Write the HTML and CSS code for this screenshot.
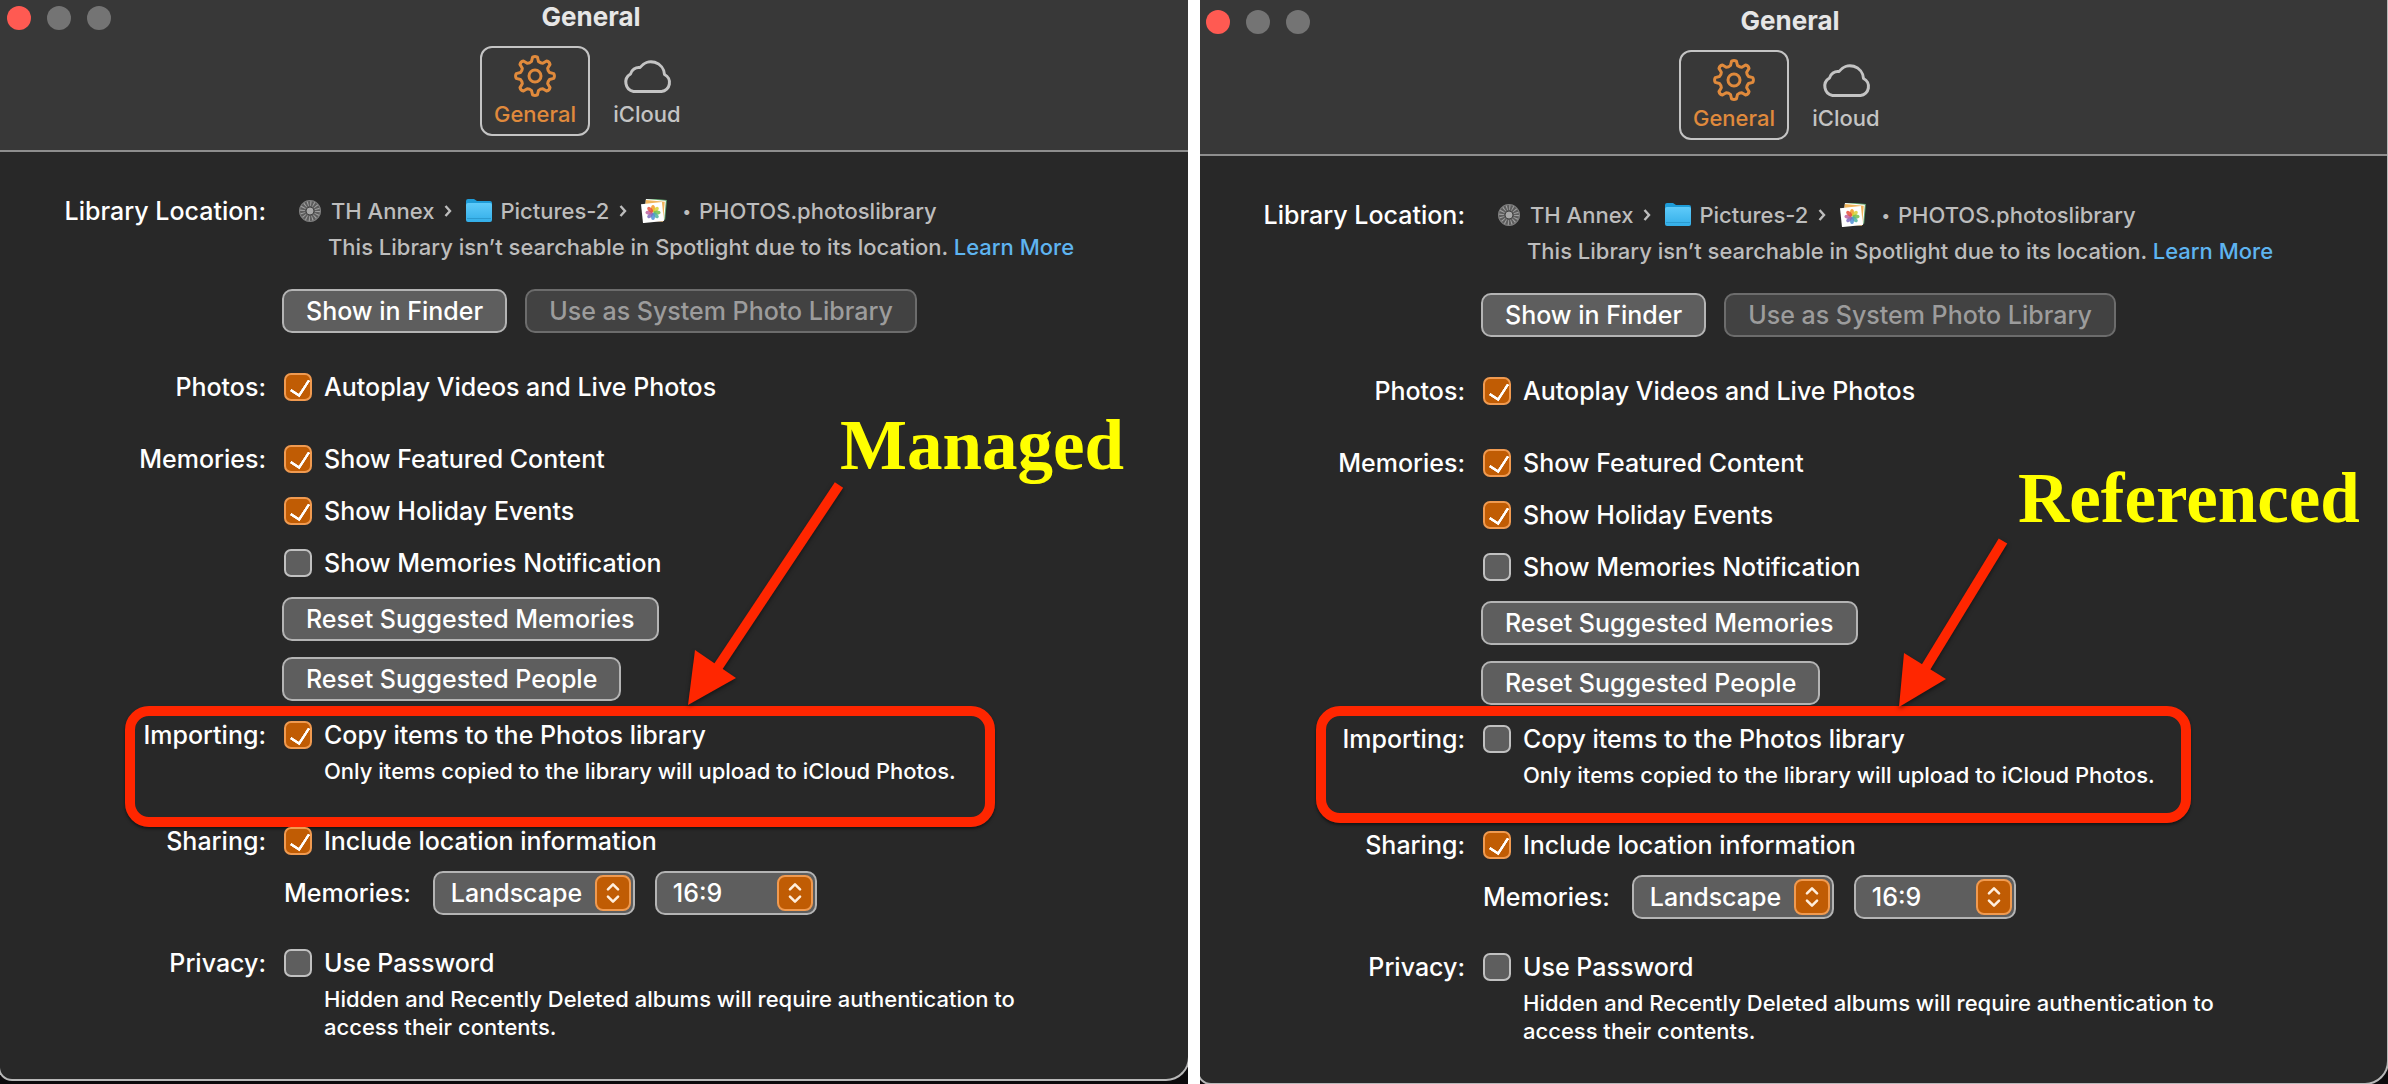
FILE: index.html
```
<!DOCTYPE html>
<html lang="en">
<head>
  <meta charset="UTF-8">
  <meta name="viewport" content="width=device-width, initial-scale=1.0">
  <title>Photos Settings - Managed vs Referenced</title>
  <link rel="stylesheet" href="styles.css">
</head>
<body>
  <!-- shared icons -->
  <svg class="sprite" aria-hidden="true">
    <linearGradient id="folderFill" x1="0" y1="0" x2="0" y2="1">
      <stop offset="0" stop-color="#5fcbfa"/>
      <stop offset="1" stop-color="#33aee8"/>
    </linearGradient>
    <symbol id="gear" viewBox="0 0 42 42">
      <g fill="none" stroke="currentColor" stroke-width="3" stroke-linejoin="round">
        <circle cx="21" cy="21" r="6"/>
        <path d="M17.5 6.5 L18.6 2.2 Q21 1 23.4 2.2 L24.5 6.5 Q26.8 8.4 28.8 8.3 L32.6 6 Q35.4 6.6 36 9.4 L33.7 13.2 Q33.6 15.4 35.5 17.5 L39.8 18.6 Q41 21 39.8 23.4 L35.5 24.5 Q33.6 26.8 33.7 28.8 L36 32.6 Q35.4 35.4 32.6 36 L28.8 33.7 Q26.6 33.6 24.5 35.5 L23.4 39.8 Q21 41 18.6 39.8 L17.5 35.5 Q15.4 33.6 13.2 33.7 L9.4 36 Q6.6 35.4 6 32.6 L8.3 28.8 Q8.4 26.6 6.5 24.5 L2.2 23.4 Q1 21 2.2 18.6 L6.5 17.5 Q8.4 15.4 8.3 13.2 L6 9.4 Q6.6 6.6 9.4 6 L13.2 8.3 Q15.4 8.4 17.5 6.5 Z"/>
      </g>
    </symbol>
    <symbol id="cloud" viewBox="0 0 50 36">
      <path d="M11.5 33.5 A9.5 9.5 0 0 1 8.5 16 A8.5 8.5 0 0 1 18 9.5 A13.5 13.5 0 0 1 42.5 16.5 A9 9 0 0 1 39.5 33.5 Z" fill="none" stroke="currentColor" stroke-width="3" stroke-linejoin="round"/>
    </symbol>
    <symbol id="disk" viewBox="0 0 24 24">
      <circle cx="12" cy="12" r="11" fill="#5c5c5c"/>
      <circle cx="12" cy="12" r="7.5" fill="none" stroke="#a0a0a0" stroke-width="5" stroke-dasharray="1 1.95"/>
      <circle cx="12" cy="12" r="10.5" fill="none" stroke="#808080"/>
      <circle cx="12" cy="12" r="4" fill="#a8a8a8" stroke="#444"/>
    </symbol>
    <symbol id="folder" viewBox="0 0 26 24">
      <path d="M0 2 Q0 0 2 0 H8 L11 2 H24 Q26 2 26 4 V12 H0 Z" fill="#1e9cd8"/>
      <rect y="4" width="26" height="19" rx="2" fill="url(#folderFill)"/>
      <path d="M1 19.5 H25" stroke="#2b9bd0"/>
    </symbol>
    <symbol id="library" viewBox="0 0 26 24">
      <g transform="rotate(5 15 11)">
        <rect x="5" y="0" width="20" height="20" fill="#62a36b"/>
        <rect x="4" y="1" width="20" height="20" fill="#fff"/>
        <rect x="4" y="2" width="19" height="20" fill="#f0b45b"/>
      </g>
      <rect x="1" y="4" width="21" height="19" fill="#fff" transform="rotate(-6 12 14)"/>
      <g fill-opacity=".85">
        <ellipse cx="12" cy="9.5" rx="2" ry="3.5" fill="#f59b23"/>
        <ellipse cx="12" cy="9.5" rx="2" ry="3.5" fill="#d8d034" transform="rotate(45 12 13.5)"/>
        <ellipse cx="12" cy="9.5" rx="2" ry="3.5" fill="#74bf4b" transform="rotate(90 12 13.5)"/>
        <ellipse cx="12" cy="9.5" rx="2" ry="3.5" fill="#4bb39c" transform="rotate(135 12 13.5)"/>
        <ellipse cx="12" cy="9.5" rx="2" ry="3.5" fill="#4f8fd6" transform="rotate(180 12 13.5)"/>
        <ellipse cx="12" cy="9.5" rx="2" ry="3.5" fill="#7d6cc0" transform="rotate(225 12 13.5)"/>
        <ellipse cx="12" cy="9.5" rx="2" ry="3.5" fill="#c0609f" transform="rotate(270 12 13.5)"/>
        <ellipse cx="12" cy="9.5" rx="2" ry="3.5" fill="#e8503c" transform="rotate(315 12 13.5)"/>
      </g>
    </symbol>
    <symbol id="chevron" viewBox="0 0 8 12">
      <path d="M1.5 1 L6 6 L1.5 11" fill="none" stroke="currentColor" stroke-width="2.4"/>
    </symbol>
    <symbol id="stepper" viewBox="0 0 16 24">
      <path d="M2.5 8 L8 2.5 L13.5 8 M2.5 16 L8 21.5 L13.5 16" fill="none" stroke="#ffeedd" stroke-width="2.8" stroke-linecap="round" stroke-linejoin="round"/>
    </symbol>
  </svg>

  <main class="compare">
    <section class="panel">
      <div class="window">
        <header class="titlebar">
          <div class="lights">
            <button type="button" class="light close" aria-label="Close"></button>
            <button type="button" class="light" aria-label="Minimize"></button>
            <button type="button" class="light" aria-label="Zoom"></button>
          </div>
          <h1>General</h1>
          <nav class="tabs">
            <button type="button" class="tab active"><svg class="tab-icon"><use href="#gear"/></svg>General</button>
            <button type="button" class="tab"><svg class="tab-icon cloud"><use href="#cloud"/></svg>iCloud</button>
          </nav>
        </header>

        <form class="settings">
          <div class="row">
            <span class="label">Library Location:</span>
            <div class="field">
              <div class="path">
                <svg class="path-icon"><use href="#disk"/></svg><span>TH Annex</span>
                <svg class="chevron"><use href="#chevron"/></svg>
                <svg class="path-icon"><use href="#folder"/></svg><span>Pictures-2</span>
                <svg class="chevron"><use href="#chevron"/></svg>
                <svg class="path-icon"><use href="#library"/></svg><span class="bullet">•</span><span>PHOTOS.photoslibrary</span>
              </div>
              <p class="note spotlight">This Library isn’t searchable in Spotlight due to its location. <a href="#">Learn More</a></p>
              <div class="buttons">
                <button type="button" class="btn">Show in Finder</button>
                <button type="button" class="btn" disabled>Use as System Photo Library</button>
              </div>
            </div>
          </div>

          <div class="row photos">
            <span class="label">Photos:</span>
            <div class="field">
              <label class="check"><input type="checkbox" checked>Autoplay Videos and Live Photos</label>
            </div>
          </div>

          <div class="row memories">
            <span class="label">Memories:</span>
            <div class="field">
              <label class="check"><input type="checkbox" checked>Show Featured Content</label>
              <label class="check"><input type="checkbox" checked>Show Holiday Events</label>
              <label class="check"><input type="checkbox">Show Memories Notification</label>
              <button type="button" class="btn">Reset Suggested Memories</button>
              <button type="button" class="btn">Reset Suggested People</button>
            </div>
          </div>

          <div class="row importing">
            <span class="label">Importing:</span>
            <div class="field">
              <label class="check"><input type="checkbox" checked>Copy items to the Photos library</label>
              <p class="note">Only items copied to the library will upload to iCloud Photos.</p>
            </div>
            <div class="highlight"></div>
          </div>

          <div class="row sharing">
            <span class="label">Sharing:</span>
            <div class="field">
              <label class="check"><input type="checkbox" checked>Include location information</label>
              <div class="selects">
                <label for="orientation1">Memories:</label>
                <span class="select orientation">
                  <select id="orientation1"><option>Landscape</option><option>Portrait</option></select>
                  <svg class="stepper"><use href="#stepper"/></svg>
                </span>
                <span class="select ratio">
                  <select aria-label="Aspect ratio"><option>16:9</option><option>4:3</option></select>
                  <svg class="stepper"><use href="#stepper"/></svg>
                </span>
              </div>
            </div>
          </div>

          <div class="row privacy">
            <span class="label">Privacy:</span>
            <div class="field">
              <label class="check"><input type="checkbox">Use Password</label>
              <p class="note">Hidden and Recently Deleted albums will require authentication to access their contents.</p>
            </div>
          </div>
        </form>
      </div>

      <svg class="arrow managed-arrow" viewBox="0 0 160 230">
        <path d="M155 5 L28 196" stroke="#ff2600" stroke-width="10"/>
        <path d="M4 225 L11 170 L52 198 Z" fill="#ff2600"/>
      </svg>
      <strong class="caption managed">Managed</strong>
    </section>

    <section class="panel referenced-panel">
      <div class="window">
        <header class="titlebar">
          <div class="lights">
            <button type="button" class="light close" aria-label="Close"></button>
            <button type="button" class="light" aria-label="Minimize"></button>
            <button type="button" class="light" aria-label="Zoom"></button>
          </div>
          <h1>General</h1>
          <nav class="tabs">
            <button type="button" class="tab active"><svg class="tab-icon"><use href="#gear"/></svg>General</button>
            <button type="button" class="tab"><svg class="tab-icon cloud"><use href="#cloud"/></svg>iCloud</button>
          </nav>
        </header>

        <form class="settings">
          <div class="row">
            <span class="label">Library Location:</span>
            <div class="field">
              <div class="path">
                <svg class="path-icon"><use href="#disk"/></svg><span>TH Annex</span>
                <svg class="chevron"><use href="#chevron"/></svg>
                <svg class="path-icon"><use href="#folder"/></svg><span>Pictures-2</span>
                <svg class="chevron"><use href="#chevron"/></svg>
                <svg class="path-icon"><use href="#library"/></svg><span class="bullet">•</span><span>PHOTOS.photoslibrary</span>
              </div>
              <p class="note spotlight">This Library isn’t searchable in Spotlight due to its location. <a href="#">Learn More</a></p>
              <div class="buttons">
                <button type="button" class="btn">Show in Finder</button>
                <button type="button" class="btn" disabled>Use as System Photo Library</button>
              </div>
            </div>
          </div>

          <div class="row photos">
            <span class="label">Photos:</span>
            <div class="field">
              <label class="check"><input type="checkbox" checked>Autoplay Videos and Live Photos</label>
            </div>
          </div>

          <div class="row memories">
            <span class="label">Memories:</span>
            <div class="field">
              <label class="check"><input type="checkbox" checked>Show Featured Content</label>
              <label class="check"><input type="checkbox" checked>Show Holiday Events</label>
              <label class="check"><input type="checkbox">Show Memories Notification</label>
              <button type="button" class="btn">Reset Suggested Memories</button>
              <button type="button" class="btn">Reset Suggested People</button>
            </div>
          </div>

          <div class="row importing">
            <span class="label">Importing:</span>
            <div class="field">
              <label class="check"><input type="checkbox">Copy items to the Photos library</label>
              <p class="note">Only items copied to the library will upload to iCloud Photos.</p>
            </div>
            <div class="highlight"></div>
          </div>

          <div class="row sharing">
            <span class="label">Sharing:</span>
            <div class="field">
              <label class="check"><input type="checkbox" checked>Include location information</label>
              <div class="selects">
                <label for="orientation2">Memories:</label>
                <span class="select orientation">
                  <select id="orientation2"><option>Landscape</option><option>Portrait</option></select>
                  <svg class="stepper"><use href="#stepper"/></svg>
                </span>
                <span class="select ratio">
                  <select aria-label="Aspect ratio"><option>16:9</option><option>4:3</option></select>
                  <svg class="stepper"><use href="#stepper"/></svg>
                </span>
              </div>
            </div>
          </div>

          <div class="row privacy">
            <span class="label">Privacy:</span>
            <div class="field">
              <label class="check"><input type="checkbox">Use Password</label>
              <p class="note">Hidden and Recently Deleted albums will require authentication to access their contents.</p>
            </div>
          </div>
        </form>
      </div>

      <svg class="arrow referenced-arrow" viewBox="0 0 120 180">
        <path d="M107 11 L27 142" stroke="#ff2600" stroke-width="10"/>
        <path d="M3 177 L8 123 L50 149 Z" fill="#ff2600"/>
      </svg>
      <strong class="caption referenced">Referenced</strong>
    </section>
  </main>
</body>
</html>
```

FILE: styles.css
```
* { box-sizing: border-box; }
body { margin: 0; background-color: #fff; font-family: Inter, "Liberation Sans", sans-serif; font-size: 25px; font-weight: 500; line-height: 28px; color: #fff; }
button, select { font: inherit; color: inherit; }
h1, p { margin: 0; }
.sprite { position: absolute; width: 0; height: 0; }

.compare { display: grid; grid-template-columns: 1fr 1fr; gap: 12px; min-height: 100vh; }
.panel { position: relative; overflow: hidden; background-color: #0c0a0c; }
.window { margin: 0 -2px; background-color: #282828; border: 2px solid #b8b8b8; border-top: none; border-radius: 0 0 24px 14px; overflow: hidden; }
.referenced-panel .window { margin: 0 -1px 0 -3px; }

/* title bar */
.titlebar { position: relative; padding: 3px 6px 14px 0; background-color: #383838; border-bottom: 2px solid #8e8e8e; }
.referenced-panel .titlebar { padding-top: 7px; }
.lights { position: absolute; left: 7px; margin-top: 3px; display: flex; gap: 16px; }
.light { width: 24px; height: 24px; padding: 0; border: none; border-radius: 50%; background-color: #747474; }
.light.close { background-color: #ff5a52; }
.titlebar h1 { font-size: 26px; line-height: 28px; font-weight: 700; text-align: center; color: #e6e6e6; }
.tabs { display: flex; justify-content: center; gap: 2px; margin-top: 15px; }
.tab { display: flex; flex-direction: column; align-items: center; width: 110px; height: 90px; padding: 7px 0 0; border: 2px solid transparent; border-radius: 12px; background: none; color: #c4c4c4; font-size: 22px; line-height: 28px; }
.tab.active { border-color: #c4c4c4; color: #e08a3c; }
.tab-icon { width: 42px; height: 42px; margin-bottom: 3px; }
.tab-icon.cloud { width: 50px; }

/* settings form */
.settings { padding: 45px 0 38px; }
.row { display: grid; grid-template-columns: 266px 1fr; column-gap: 16px; position: relative; }
.label { height: 28px; line-height: 28px; text-align: right; }
.field { display: flex; flex-direction: column; align-items: flex-start; }
.photos { margin-top: 40px; }
.memories { margin-top: 44px; }
.importing { margin-top: 20px; }
.sharing { margin-top: 42px; }
.privacy { margin-top: 34px; }

.path { display: flex; align-items: center; padding-left: 15px; color: #bdbdbd; font-size: 22px; }
.path-icon { width: 26px; height: 24px; margin-right: 8px; }
.chevron { width: 8px; height: 12px; margin: 0 14px 0 10px; }
.bullet { margin: 0 8px 0 7px; font-size: 16px; }
.note { max-width: 740px; margin: 8px 0 0 42px; font-size: 22px; }
.spotlight { max-width: none; margin-left: 46px; color: #bdbdbd; }
.note a { color: #5eb4f0; text-decoration: none; }

.buttons { display: flex; gap: 18px; margin-top: 28px; }
.btn { height: 44px; padding: 0 22px; border: 2px solid #b4b4b4; border-radius: 10px; background-color: #5e5e5e; line-height: 28px; }
.btn:disabled { border-color: #6c6c6c; background-color: #424242; color: #9c9c9c; }
.check + .btn { margin-top: 20px; }
.btn + .btn { margin-top: 16px; }
.buttons .btn { margin-top: 0; }

.check { display: flex; align-items: center; gap: 12px; height: 28px; margin-left: 2px; }
.check + .check { margin-top: 24px; }
.check input { appearance: none; position: relative; width: 28px; height: 28px; margin: 0; border: 2px solid #c0c0c0; border-radius: 7px; background-color: #5e5e5e; }
.check input:checked { border-color: #f09a50; background-color: #c05c04; }
.check input:checked::after { content: ""; position: absolute; left: 8px; top: 1px; width: 9px; height: 17px; border: solid #fff; border-width: 0 3px 3px 0; border-radius: 1px; transform: rotate(33deg); }

.selects { display: flex; align-items: center; margin: 16px 0 0 2px; }
.select { position: relative; }
.select select { appearance: none; display: block; width: 100%; height: 44px; padding: 0 16px; border: 2px solid #b4b4b4; border-radius: 10px; background-color: #5e5e5e; line-height: 28px; }
.orientation { width: 202px; margin-left: 22px; }
.ratio { width: 162px; margin-left: 20px; }
.stepper { position: absolute; right: 4px; top: 4px; width: 36px; height: 36px; padding: 5px 8px; border: 2px solid #f09a50; border-radius: 8px; background-color: #c05c04; pointer-events: none; }

/* annotations */
.highlight { position: absolute; left: 125px; top: -15px; width: 870px; height: 121px; border: 10px solid #ff2600; border-radius: 24px; box-shadow: 0 2px 3px rgba(0, 0, 0, 0.5); }
.referenced-panel .highlight { left: 117px; top: -19px; width: 875px; height: 117px; }
.arrow { position: absolute; filter: drop-shadow(0 2px 2px rgba(0, 0, 0, 0.5)); }
.managed-arrow { left: 684px; top: 480px; width: 160px; height: 230px; }
.referenced-arrow { left: 696px; top: 530px; width: 120px; height: 180px; }
.caption { position: absolute; font-family: "Liberation Serif", "Times New Roman", serif; font-size: 71px; line-height: 80px; color: #ffff00; }
.managed { left: 840px; top: 405px; }
.referenced { left: 818px; top: 458px; }
```
